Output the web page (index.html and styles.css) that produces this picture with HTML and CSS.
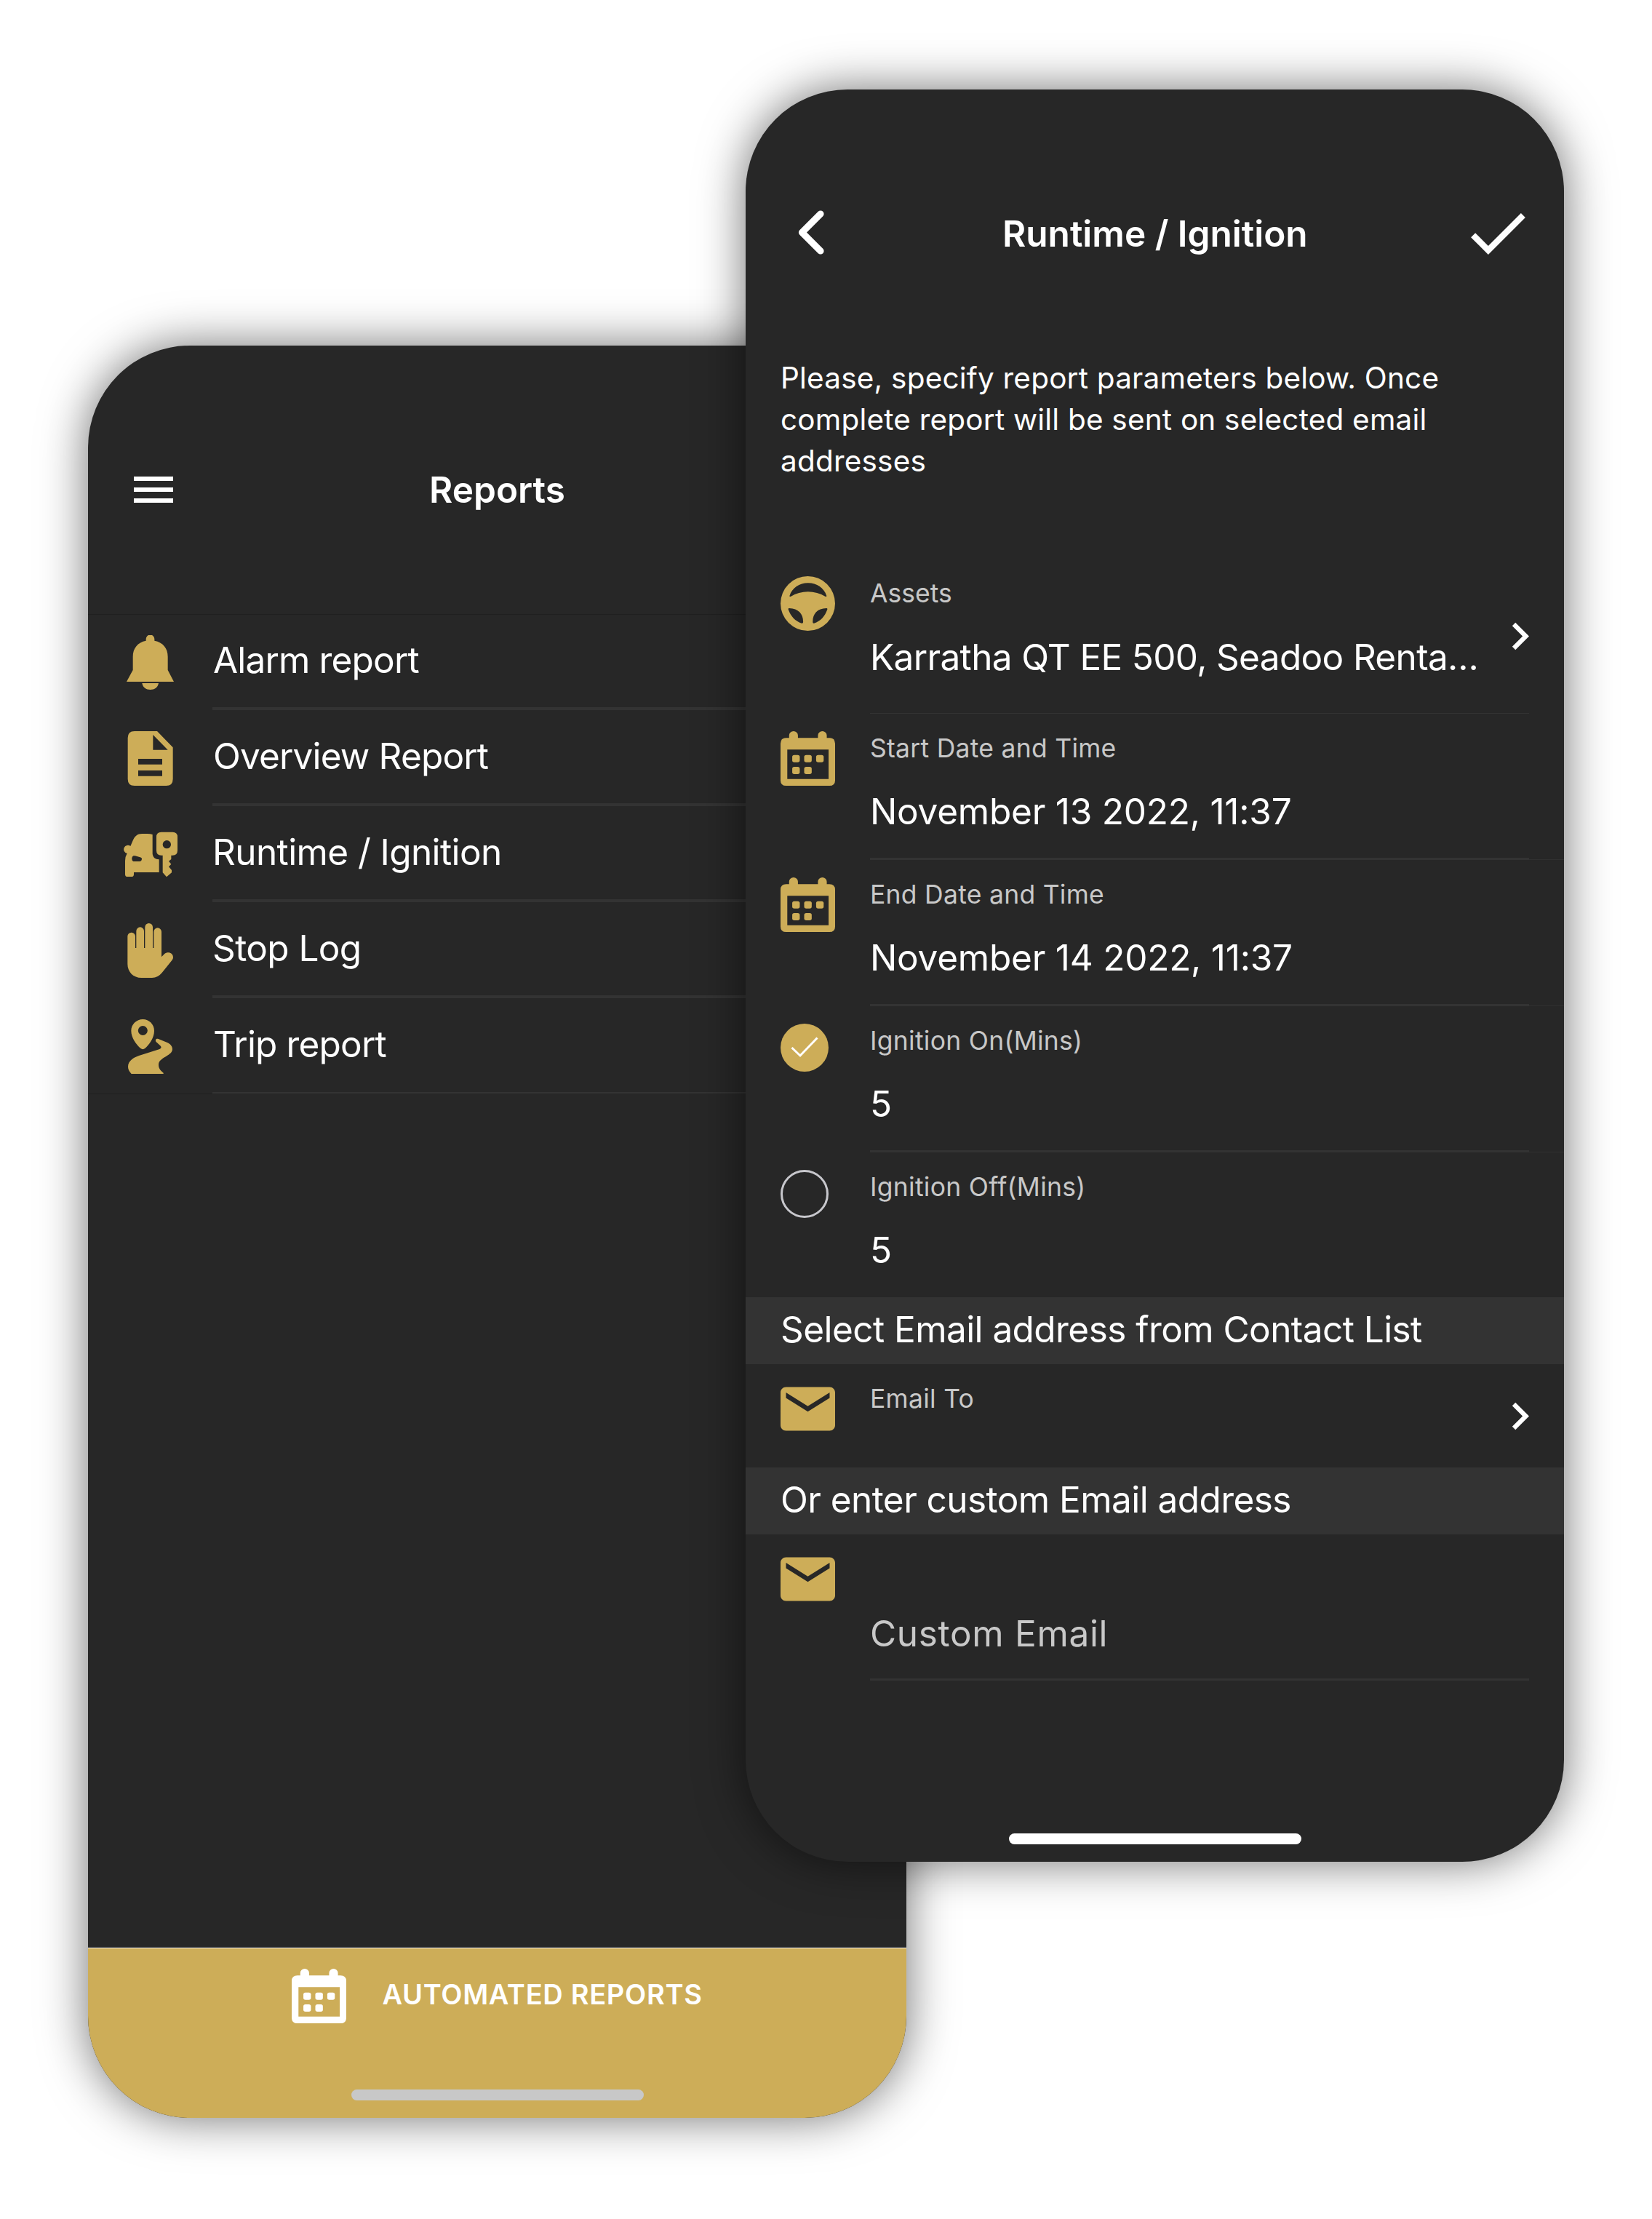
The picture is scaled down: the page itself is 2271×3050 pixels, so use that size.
FILE: index.html
```html
<!DOCTYPE html>
<html lang="en">
<head>
<meta charset="utf-8">
<title>Reports</title>
<link rel="stylesheet" href="styles.css">
</head>
<body>
<svg class="defs" aria-hidden="true">
  <symbol id="calendar" viewBox="92 735 210 225" preserveAspectRatio="none">
    <path fill-rule="evenodd" d="M125 763V752a17 17 0 0 1 34 0V763H236V752a17 17 0 0 1 34 0V763H280Q302 763 302 786V938Q302 960 280 960H114Q92 960 92 938V786Q92 763 114 763ZM118 811V932H277V811Z"/>
    <rect x="137" y="833" width="29" height="30" rx="8"/><rect x="183" y="833" width="29" height="30" rx="8"/><rect x="229" y="833" width="29" height="30" rx="8"/>
    <rect x="137" y="882" width="29" height="30" rx="8"/><rect x="183" y="882" width="29" height="30" rx="8"/>
  </symbol>
  <symbol id="mail" viewBox="2 2 20 20">
    <path d="M20 4H4c-1.100 0-1.990.9-1.990 2L2 18c0 1.100.9 2 2 2h16c1.100 0 2-.9 2-2V6c0-1.100-.9-2-2-2zm0 4l-8 5-8-5V6l8 5 8-5v2z"/>
  </symbol>
  <symbol id="chevron" viewBox="0 0 24 24">
    <path d="M10 6 8.590 7.410 13.170 12l-4.580 4.590L10 18l6-6z"/>
  </symbol>
</svg>
<main class="stage">
  <section class="phone phone-reports">
    <header class="header header-reports">
      <svg class="menu" viewBox="0 0 54 36"><path d="M0 0h54v6H0zM0 15h54v6H0zM0 30h54v6H0z"/></svg>
      <h1 class="title">Reports</h1>
    </header>
    <ul class="list">
      <li class="item"><span class="item-icon"><svg class="icon" viewBox="87 99 225 225"><path d="M182 122V115a17.500 17.500 0 0 1 35 0V122C252 129 272 152 272 188V243L297 291H102L128 243V188C128 152 148 129 182 122ZM166 297H234C231 315 217 324 200 324S169 315 166 297Z"/></svg></span><span class="item-text">Alarm report</span></li>
      <li class="item"><span class="item-icon"><svg class="icon" viewBox="87 495 225 225"><path fill-rule="evenodd" d="M135 495H228L293 562V692Q293 720 265 720H135Q107 720 107 692V523Q107 495 135 495ZM211 510V572H272ZM150 609V632H249V609ZM150 657V680H249V657Z"/></svg></span><span class="item-text">Overview Report</span></li>
      <li class="item"><span class="item-icon"><svg class="icon" viewBox="87 51 225 225"><path fill-rule="evenodd" d="M118 129L128 106C136 88 146 78 166 78H188Q200 78 209 81V160C210 175 220 184 236 184V237H132V245Q132 255 122 255H106Q96 255 96 245V190Q96 172 104 159A17 17 0 1 1 118 129ZM130 169Q123 173 124 182Q125 192 134 192H155Q165 192 165 181Q165 176 158 175L137 169Q133 168 130 169ZM245 71H292Q312 71 312 91V147Q312 167 292 167H286V183L276 191L286 203L276 214L288 228V238L267 256L251 238V167H245Q225 167 225 147V91Q225 71 245 71ZM268 105A17 17 0 1 0 268 139A17 17 0 1 0 268 105Z"/></svg></span><span class="item-text">Runtime / Ignition</span></li>
      <li class="item"><span class="item-icon"><svg class="icon" viewBox="87 447 225 225"><path d="M106 501A16 16 0 0 1 138 501V549H142V479A16 16 0 0 1 174 479V549H178V463A16 16 0 0 1 210 463V549H214V482A16 16 0 0 1 246 482V586L258 574C272 562 294 569 294 588Q294 594 289 600L248 651Q231 672 207 672H163C130 672 106 648 106 615Z"/></svg></span><span class="item-text">Stop Log</span></li>
      <li class="item"><span class="item-icon"><svg class="icon" viewBox="87 843 225 225"><path fill-rule="evenodd" d="M169 843C195 843 216 864 216 890C216 920 195 948 178 963Q169 970 160 963C143 948 121 920 121 890C121 864 143 843 169 843ZM169 870A19.500 19.500 0 1 0 169 909A19.500 19.500 0 1 0 169 870ZM223 935C219 926 226 921 233 924L268 938C283 944 291 955 291 966C291 978 280 987 265 996C246 1007 234 1015 234 1031C234 1046 244 1056 254 1064V1068H122C114 1060 108 1050 108 1039C108 1013 132 998 165 989L236 967C246 963 247 958 241 952Z"/></svg></span><span class="item-text">Trip report</span></li>
    </ul>
    <footer class="footer">
      <div class="automated"><svg class="icon"><use href="#calendar"/></svg><span class="automated-text">AUTOMATED REPORTS</span></div>
      <span class="home-bar home-bar-gray"></span>
    </footer>
  </section>

  <section class="phone phone-runtime">
    <header class="header header-runtime">
      <svg class="back" viewBox="0 0 36 61"><path d="M31 5 5.500 30.500 31 56"/></svg>
      <h1 class="title">Runtime / Ignition</h1>
      <svg class="done" viewBox="3.410 5.590 17.590 13.410"><path d="M9 16.170 4.830 12l-1.420 1.410L9 19 21 7l-1.410-1.410z"/></svg>
    </header>
    <p class="intro">Please, specify report parameters below. Once complete report will be sent on selected email addresses</p>

    <div class="field field-assets">
      <span class="field-icon"><svg class="icon" viewBox="92 96 210 225" preserveAspectRatio="none"><path fill-rule="evenodd" d="M197 96A105 112.500 0 0 1 197 321A105 112.500 0 0 1 197 96ZM127 176C137 144 164 124 198 124S259 144 269 176Q270 181 265 180C224 153 171 153 131 180Q126 181 127 176ZM126 228Q121 227 122 233C131 261 149 281 173 290Q179 291 179 286C180 252 161 229 126 228ZM268 228Q273 227 272 233C263 261 246 281 221 290Q216 291 216 286C215 252 233 229 268 228Z"/></svg></span>
      <div class="field-body"><div class="field-texts"><span class="label">Assets</span><span class="value">Karratha QT EE 500, Seadoo Renta…</span></div><svg class="chevron"><use href="#chevron"/></svg></div>
    </div>
    <div class="field field-ruled">
      <span class="field-icon"><svg class="icon"><use href="#calendar"/></svg></span>
      <div class="field-body"><div class="field-texts"><span class="label">Start Date and Time</span><span class="value">November 13 2022, 11:37</span></div></div>
    </div>
    <div class="field field-ruled">
      <span class="field-icon"><svg class="icon"><use href="#calendar"/></svg></span>
      <div class="field-body"><div class="field-texts"><span class="label">End Date and Time</span><span class="value">November 14 2022, 11:37</span></div></div>
    </div>
    <div class="field field-ruled">
      <span class="field-icon"><svg class="radio" viewBox="0 0 66 66"><circle class="radio-on" cx="33" cy="33" r="33"/><path class="radio-tick" d="M15.500 33 27 44 50.500 19.500"/></svg></span>
      <div class="field-body"><div class="field-texts"><span class="label">Ignition On(Mins)</span><span class="value">5</span></div></div>
    </div>
    <div class="field field-last">
      <span class="field-icon"><svg class="radio" viewBox="0 0 66 66"><circle class="radio-off" cx="33" cy="33" r="31.500"/></svg></span>
      <div class="field-body"><div class="field-texts"><span class="label">Ignition Off(Mins)</span><span class="value">5</span></div></div>
    </div>
    <h2 class="section">Select Email address from Contact List</h2>
    <div class="field field-email">
      <span class="field-icon"><svg class="icon"><use href="#mail"/></svg></span>
      <div class="field-body"><div class="field-texts"><span class="label">Email To</span></div><svg class="chevron"><use href="#chevron"/></svg></div>
    </div>
    <h2 class="section">Or enter custom Email address</h2>
    <div class="field field-ruled field-custom">
      <span class="field-icon"><svg class="icon"><use href="#mail"/></svg></span>
      <div class="field-body"><div class="field-texts"><span class="label"></span><span class="value placeholder">Custom Email</span></div></div>
    </div>
    <span class="home-bar home-bar-white"></span>
  </section>
</main>
</body>
</html>
```
FILE: styles.css
```css
* { box-sizing: border-box; }
body {
  margin: 0;
  background: #fff;
  color: #fff;
  font-family: Inter, "Liberation Sans", sans-serif;
}
svg { display: block; }
h1, h2, p, ul { margin: 0; padding: 0; }
.defs { position: absolute; width: 0; height: 0; }

.stage { position: relative; width: 2271px; height: 3050px; overflow: hidden; }
.phone {
  position: absolute;
  display: flex;
  flex-direction: column;
  width: 1125px;
  height: 2436px;
  overflow: hidden;
  border-radius: 140px;
  background: #272727;
  box-shadow: 0 0 65px rgba(0, 0, 0, .56);
}
.phone-reports { left: 121px; top: 475px; }
.phone-runtime { left: 1025px; top: 123px; }

.header {
  display: grid;
  grid-template-columns: 1fr auto 1fr;
  align-items: center;
  height: 132px;
  margin-top: 132px;
  flex: none;
}
.header-reports { padding: 0 63px; }
.header-runtime { padding: 0 53px 0 72px; grid-template-columns: 281px auto 1fr; }
.title { grid-column: 2; font-size: 49.5px; font-weight: 600; line-height: 60px; }
.menu { width: 54px; height: 36px; fill: #fff; }
.back {
  width: 36px; height: 61px; margin-top: -3px;
  fill: none; stroke: #fff; stroke-width: 9.2px; stroke-linecap: round; stroke-linejoin: round;
}
.done { width: 75px; height: 57px; justify-self: end; fill: #fff; }

.icon { width: 75px; height: 75px; fill: #cdad58; }

.list { margin-top: 105px; list-style: none; }
.item { display: flex; height: 132px; }
.item:first-child { box-shadow: inset 0 1px #202020; }
.item-icon { width: 171px; padding: 29px 0 0 48px; }
.item-text {
  flex: 1;
  border-bottom: 4px solid #333;
  font-size: 49.5px;
  letter-spacing: -.84px;
  line-height: 126px;
  text-indent: 1px;
  white-space: nowrap;
}
.item:nth-child(3) .item-text, .item:nth-child(4) .item-text { letter-spacing: -.6px; text-indent: 0; }
.item:last-child .item-icon { box-shadow: inset 0 -1px #202020; }
.item:last-child .item-text { margin-bottom: 1px; border-bottom-width: 2px; }

.footer {
  display: flex;
  flex-direction: column;
  align-items: center;
  height: 234px;
  margin-top: auto;
  border-top: 1px solid #fff;
  background: #cdad58;
}
.automated { display: flex; gap: 49px; margin-top: 28px; }
.automated .icon { fill: #fff; }
.automated-text { font-size: 38px; font-weight: 600; letter-spacing: .68px; line-height: 70px; }
.home-bar { width: 402px; height: 15px; margin: auto auto 24px; border-radius: 8px; }
.home-bar-gray { background: #c8c8c8; }
.home-bar-white { background: #fff; }

.intro {
  height: 381px;
  padding: 104px 48px 0;
  font-size: 40.5px;
  letter-spacing: .2px;
  line-height: 57px;
}
.field { display: flex; height: 201px; flex: none; }
.field::after { content: ""; width: 48px; height: 1px; align-self: flex-end; }
.field-icon { width: 171px; padding: 24px 0 0 48px; }
.field-body { display: flex; flex: 1; min-width: 0; justify-content: space-between; }
.field-texts { display: flex; flex-direction: column; padding-top: 24px; white-space: nowrap; }
.label { flex: none; height: 47px; color: #c8c8c8; font-size: 35.5px; letter-spacing: .27px; line-height: 48px; }
.value { flex: none; font-size: 49.5px; letter-spacing: -.22px; line-height: 126px; }
.value.placeholder { color: #c8c8c8; letter-spacing: .68px; line-height: 130px; }
.chevron { width: 75px; height: 75px; margin-right: -25px; align-self: center; flex: none; fill: #fff; }

.field-assets { height: 213px; }
.field-assets .field-body { border-bottom: 1px solid #333; }
.field-assets .label { letter-spacing: 0; }
.field-assets .value { letter-spacing: -.66px; line-height: 128px; }
.field-ruled .field-body { border-bottom: 3px solid #333; }
.field-ruled::after { background: #303030; }
.field-last { height: 199px; }
.field-email { height: 142px; }
.field-custom::after { background: none; }

.section {
  height: 92px;
  padding-left: 48px;
  background: #333;
  font-size: 49.5px;
  font-weight: 400;
  letter-spacing: -.56px;
  line-height: 88px;
  flex: none;
}
.radio { width: 66px; height: 66px; }
.radio-on { fill: #cdad58; }
.radio-tick { fill: none; stroke: #fff; stroke-width: 3px; }
.radio-off { fill: none; stroke: #c7c7cc; stroke-width: 3px; }
```
